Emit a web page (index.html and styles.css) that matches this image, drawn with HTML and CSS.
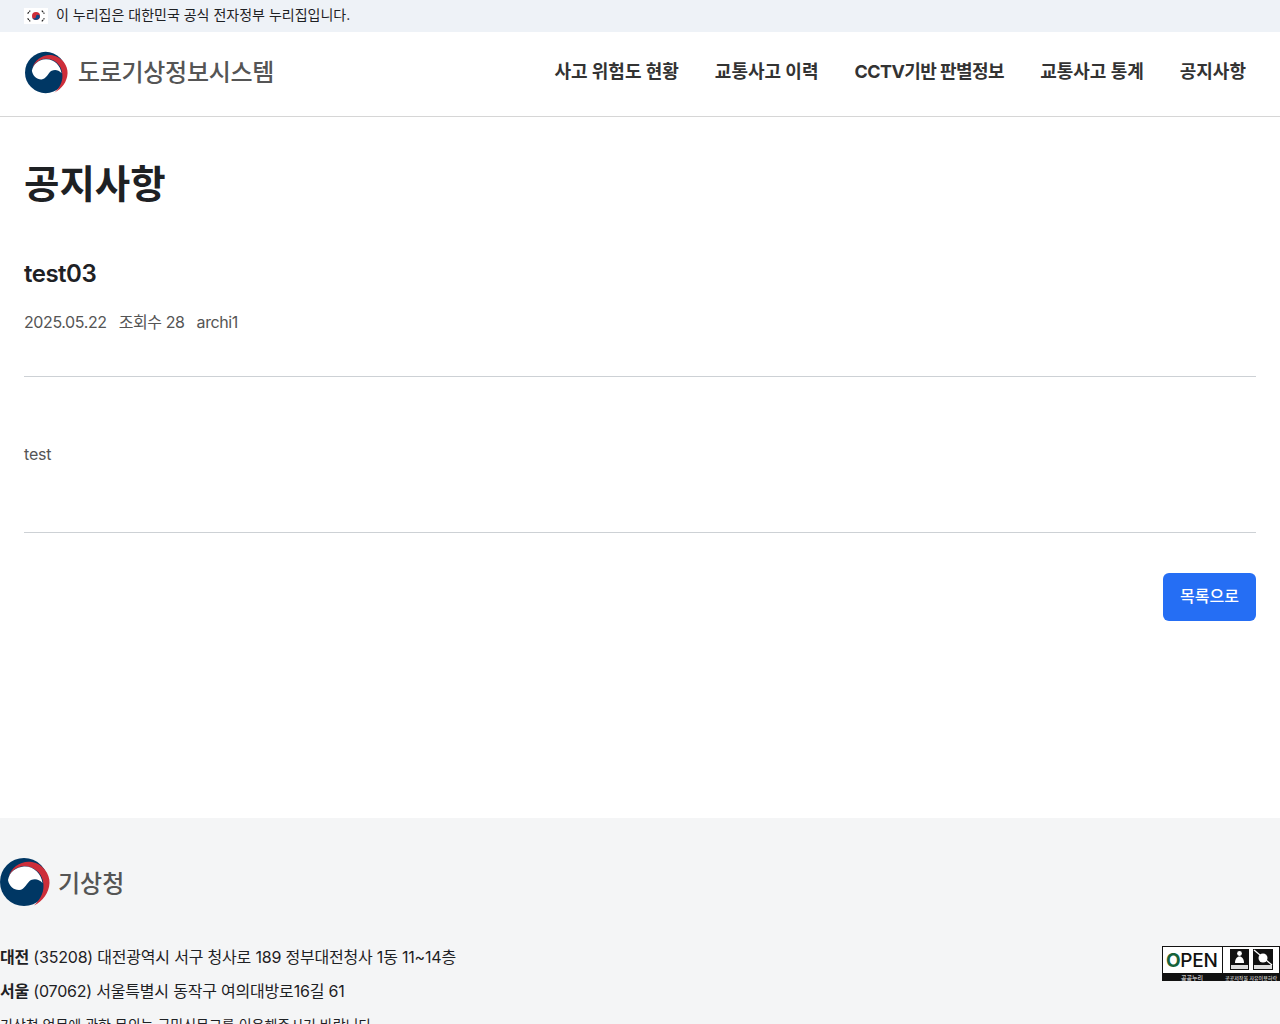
FILE: index.html
```html
<!DOCTYPE html>
<html lang="ko">
<head>
  <meta charset="UTF-8">
  <meta name="viewport" content="width=device-width, initial-scale=1">
  <title>공지사항 - 도로기상정보시스템</title>
  <link rel="stylesheet" href="styles.css">
</head>
<body>
  <div class="gov-banner">
    <svg class="flag" viewBox="0 0 24 16" width="24" height="16" aria-hidden="true">
      <rect width="24" height="16" fill="#fff"/>
      <circle cx="12" cy="8" r="4" fill="#cd2e3a"/>
      <path d="M8.2 9.2a2 2 0 0 0 3.8 -1.2a2 2 0 0 1 3.8 1.2a4 4 0 0 1 -7.6 0z" fill="#0f4a8a"/>
      <g stroke="#222" stroke-width="1.2" stroke-dasharray="2 .6">
        <path d="M3.6 5.6l2.6 -3"/>
        <path d="M17.8 2.6l2.6 3"/>
        <path d="M3.6 10.4l2.6 3"/>
        <path d="M17.8 13.4l2.6 -3"/>
      </g>
    </svg>
    <span>이 누리집은 대한민국 공식 전자정부 누리집입니다.</span>
  </div>

  <header class="site-header">
    <a class="brand" href="#">
      <svg class="emblem" viewBox="0 0 100 100" width="43" height="43" aria-hidden="true">
        <circle cx="48" cy="50" r="48" fill="#003764"/>
        <path d="M17 40C22 20 44 6 64 10C86 14 100 34 99 52C98 72 86 88 68 97C82 84 90 68 86 48C82 28 62 15 42 19C30 22 21 30 17 40Z" fill="#cd2e3a"/>
        <path d="M16 46C19 30 32 20 48 19C68 18 83 34 85 52C78 44 70 43 62 46C54 50 50 66 38 66C27 66 18 58 16 46Z" fill="#fff"/>
      </svg>
      <span class="brand-name">도로기상정보시스템</span>
    </a>
    <nav class="main-nav">
      <a href="#">사고 위험도 현황</a>
      <a href="#">교통사고 이력</a>
      <a class="nav-cctv" href="#">CCTV기반 판별정보</a>
      <a href="#">교통사고 통계</a>
      <a href="#">공지사항</a>
    </nav>
  </header>

  <main class="notice">
    <h1>공지사항</h1>
    <h2>test03</h2>
    <div class="meta">
      <span>2025.05.22</span>
      <span>조회수 28</span>
      <span>archi1</span>
    </div>
    <div class="notice-body">test</div>
    <div class="actions">
      <a class="btn-primary" href="#">목록으로</a>
    </div>
  </main>

  <footer class="site-footer">
    <div class="footer-logo">
      <svg class="emblem" viewBox="0 0 100 100" width="50" height="50" aria-hidden="true">
        <circle cx="48" cy="50" r="48" fill="#003764"/>
        <path d="M17 40C22 20 44 6 64 10C86 14 100 34 99 52C98 72 86 88 68 97C82 84 90 68 86 48C82 28 62 15 42 19C30 22 21 30 17 40Z" fill="#cd2e3a"/>
        <path d="M16 46C19 30 32 20 48 19C68 18 83 34 85 52C78 44 70 43 62 46C54 50 50 66 38 66C27 66 18 58 16 46Z" fill="#fff"/>
      </svg>
      <span class="footer-logo-name">기상청</span>
    </div>
    <div class="footer-row">
      <div class="address">
        <p><b>대전</b> (35208) 대전광역시 서구 청사로 189 정부대전청사 1동 11~14층</p>
        <p><b>서울</b> (07062) 서울특별시 동작구 여의대방로16길 61</p>
        <p class="address-note">기상청 업무에 관한 문의는 국민신문고를 이용해주시기 바랍니다.</p>
      </div>
      <svg class="open-badge" viewBox="0 0 118 35" width="118" height="35" role="img" aria-label="공공누리 공공저작물 자유이용허락">
        <rect x=".5" y=".5" width="117" height="34" fill="#fff" stroke="#111"/>
        <rect y="27" width="118" height="8" fill="#111"/>
        <path d="M60.5 0v27" stroke="#111"/>
        <text x="4" y="21" class="open-word"><tspan class="open-o">O</tspan>PEN</text>
        <text x="30" y="33.500" class="badge-small badge-small-wide" text-anchor="middle">공공누리</text>
        <text x="89" y="33.500" class="badge-small" text-anchor="middle">공공저작물 자유이용허락</text>
        <rect x="68" y="3" width="19" height="21" fill="#111"/>
        <circle cx="77.500" cy="7.500" r="2.400" fill="#fff"/>
        <path d="M73 17c0-4 2-6.500 4.500-6.500s4.500 2.500 4.500 6.500z" fill="#fff"/>
        <rect x="69" y="19" width="17" height="4" fill="#ddd"/>
        <rect x="91" y="3" width="20" height="21" fill="#111"/>
        <circle cx="101" cy="12" r="4.500" fill="#fff"/>
        <path d="M92 4l18 15" stroke="#fff" stroke-width="1.300"/>
        <rect x="92" y="19" width="18" height="4" fill="#ddd"/>
      </svg>
    </div>
  </footer>
</body>
</html>
```

FILE: styles.css
```css
* { box-sizing: border-box; }
body {
  margin: 0;
  font-family: Inter, 'Noto Sans CJK KR', sans-serif;
  color: #1e2124;
  background: #fff;
}
a { color: inherit; text-decoration: none; }

.gov-banner {
  height: 32px;
  background: #eef2f7;
  display: flex;
  align-items: center;
  gap: 8px;
  padding: 0 0 1px 24px;
  font-size: 14px;
}
.gov-banner span { padding-bottom: 3px; }
.flag { display: block; }

.site-header {
  height: 85px;
  border-bottom: 1px solid #d6d6d6;
  display: flex;
  align-items: center;
  justify-content: space-between;
  padding: 0 34px 4px 25px;
}
.brand { display: flex; align-items: center; gap: 10px; }
.brand-name {
  font-size: 24px;
  font-weight: 500;
  color: #555;
  letter-spacing: -0.3px;
  padding-bottom: 4px;
}
.emblem { display: block; flex-shrink: 0; }
.main-nav { display: flex; gap: 36px; padding-bottom: 4px; }
.main-nav a {
  font-size: 18px;
  font-weight: 700;
  color: #333;
}
.main-nav .nav-cctv { letter-spacing: -0.55px; }

.notice {
  padding: 41px 24px 0;
  height: 701px;
}
.notice h1 {
  margin: 0;
  font-size: 38.5px;
  line-height: 52px;
  font-weight: 700;
}
.notice h2 {
  margin: 46px 0 0;
  font-size: 24px;
  line-height: 36px;
  font-weight: 600;
  letter-spacing: -0.5px;
}
.meta {
  margin-top: 18px;
  display: flex;
  gap: 12px;
  font-size: 16px;
  line-height: 24px;
  color: #555;
  letter-spacing: -0.4px;
}
.notice-body {
  margin-top: 42px;
  border-top: 1px solid #cdd1d5;
  border-bottom: 1px solid #cdd1d5;
  height: 157px;
  padding-bottom: 2px;
  display: flex;
  align-items: center;
  font-size: 16px;
  color: #555;
  letter-spacing: -0.2px;
}
.actions {
  display: flex;
  justify-content: flex-end;
  margin-top: 40px;
}
.btn-primary {
  width: 93px;
  height: 48px;
  border-radius: 6px;
  background: #256ef4;
  color: #fff;
  font-size: 16px;
  font-weight: 500;
  padding-bottom: 5px;
  display: flex;
  align-items: center;
  justify-content: center;
}

.site-footer {
  background: #f4f5f6;
  padding-top: 39px;
}
.footer-logo { display: flex; align-items: center; gap: 8px; }
.footer-logo-name {
  font-size: 24px;
  font-weight: 500;
  color: #555;
  padding-bottom: 2px;
}
.footer-row {
  display: flex;
  justify-content: space-between;
  align-items: flex-start;
  margin-top: 33px;
}
.address p {
  margin: 0;
  font-size: 16px;
  line-height: 34px;
  letter-spacing: -0.2px;
}
.address .address-note {
  font-size: 14px;
  letter-spacing: 0;
}
.open-badge { display: block; margin-top: 6px; }
.open-word {
  font-size: 19px;
  font-weight: 500;
  letter-spacing: -0.3px;
  fill: #111;
}
.open-o { fill: #17633a; font-weight: 700; }
.badge-small {
  font-size: 5px;
  fill: #fff;
}
.badge-small-wide { font-size: 6px; }
```
